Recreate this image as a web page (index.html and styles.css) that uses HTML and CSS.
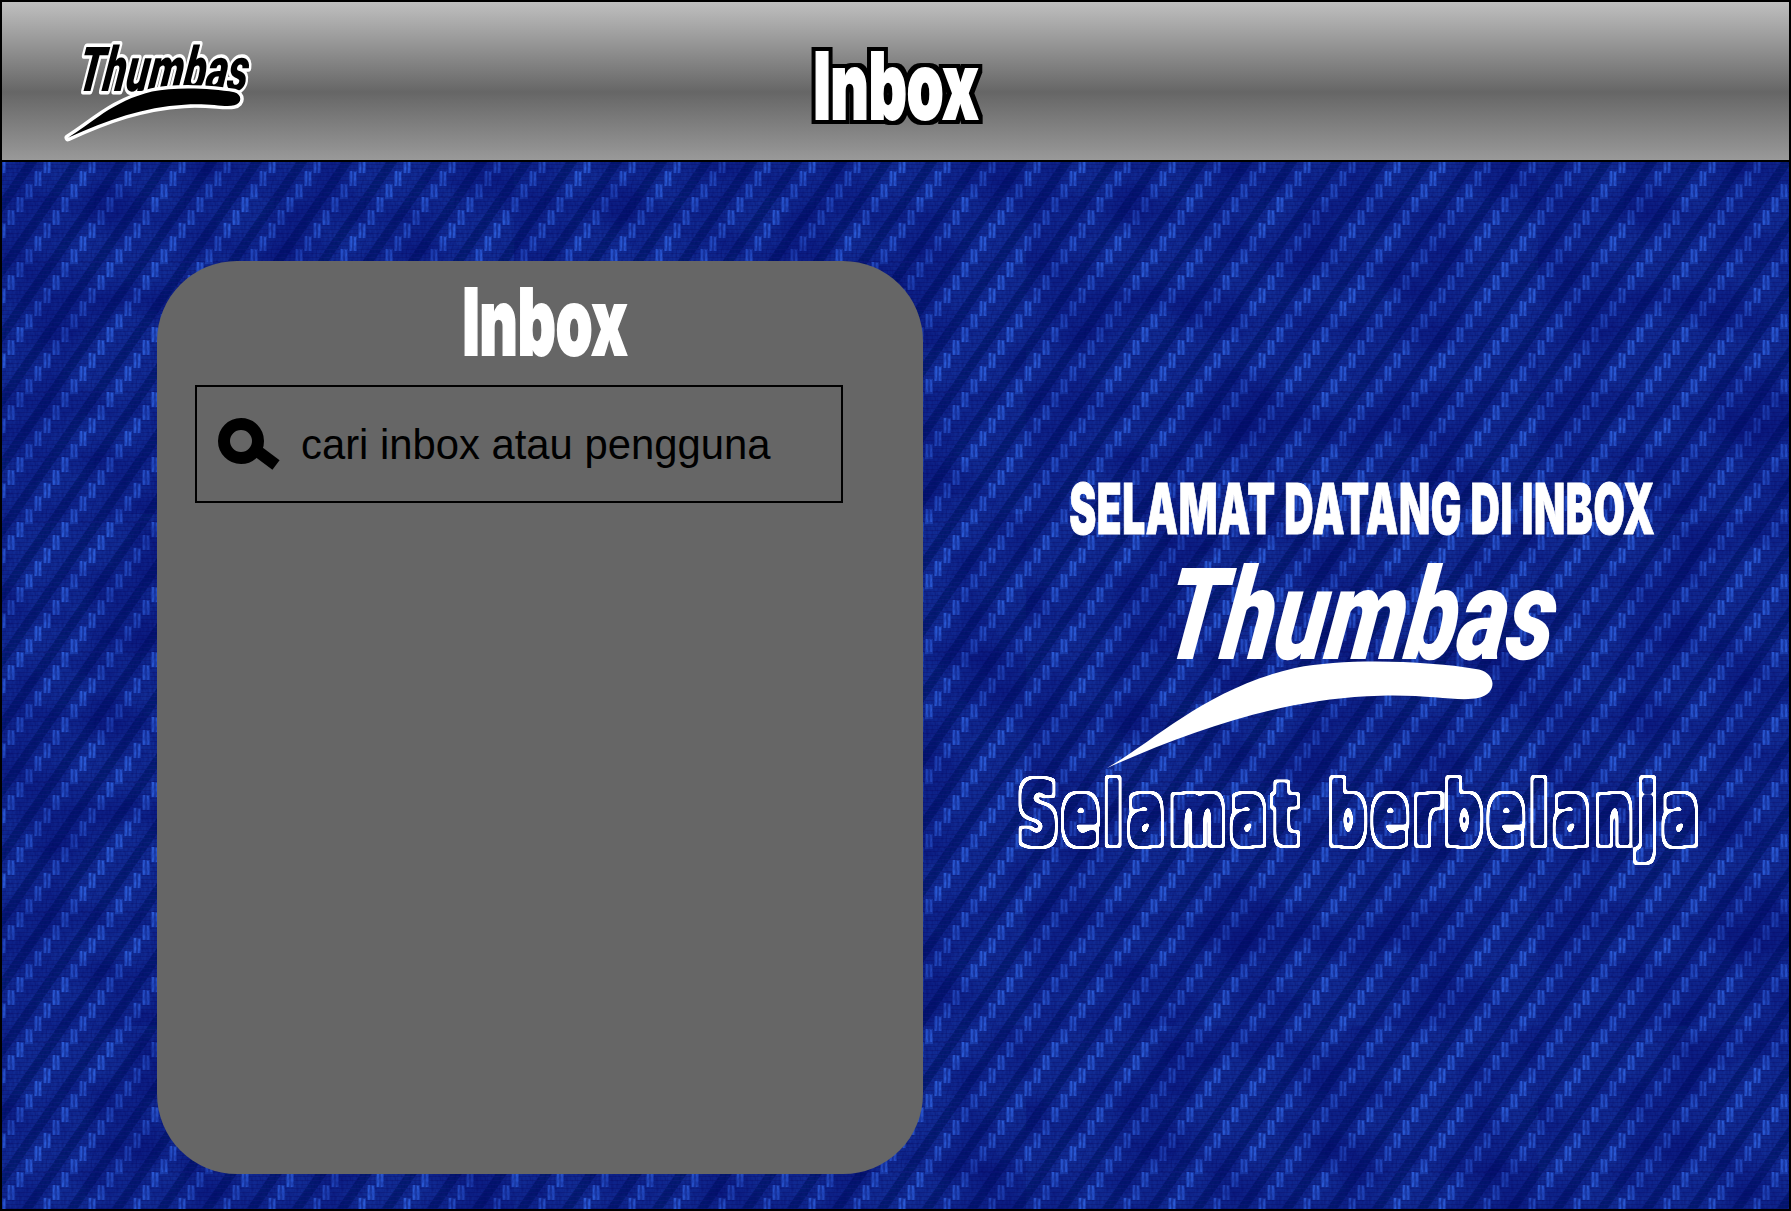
FILE: index.html
```html
<!DOCTYPE html>
<html lang="id">
<head>
    <meta charset="UTF-8">
    <meta name="viewport" content="width=device-width, initial-scale=1.0">
    <title>Inbox</title>
    <link rel="stylesheet" href="styles.css">
</head>
<body>

<!-- filter untuk teks bergaris tepi -->
<svg class="defs" width="0" height="0" aria-hidden="true">
    <defs>
        <filter id="ring" x="-5%" y="-20%" width="110%" height="140%" color-interpolation-filters="sRGB">
            <feMorphology in="SourceAlpha" operator="dilate" radius="5.8"/>
            <feGaussianBlur stdDeviation="1.8"/>
            <feComponentTransfer result="outer"><feFuncA type="linear" slope="8" intercept="-3.5"/></feComponentTransfer>
            <feMorphology in="SourceAlpha" operator="dilate" radius="3.4"/>
            <feGaussianBlur stdDeviation="1.8"/>
            <feComponentTransfer result="inner"><feFuncA type="linear" slope="8" intercept="-3.5"/></feComponentTransfer>
            <feFlood flood-color="#fff"/>
            <feComposite in2="outer" operator="in"/>
            <feComposite in2="inner" operator="out"/>
        </filter>
        <filter id="outline" x="-10%" y="-20%" width="120%" height="140%" color-interpolation-filters="sRGB">
            <feMorphology in="SourceAlpha" operator="dilate" radius="4" result="fat"/>
            <feFlood flood-color="#000"/>
            <feComposite in2="fat" operator="in" result="edge"/>
            <feMerge>
                <feMergeNode in="edge"/>
                <feMergeNode in="SourceGraphic"/>
            </feMerge>
        </filter>
    </defs>
</svg>

<div class="page">
    <header class="topbar">
        <svg class="logo logo-small" viewBox="0 0 184 97" aria-label="Thumbas">
            <text class="logo-text" x="15" y="47" textLength="170" lengthAdjust="spacingAndGlyphs" transform="skewX(-8)">Thumbas</text>
            <path transform="scale(.447 .335)" vector-effect="non-scaling-stroke" d="M0 280C50 240 100 170 188 142C240 128 320 132 372 144C390 150 390 178 372 183C350 190 320 176 260 181C170 188 90 225 0 280Z"/>
        </svg>
        <h1 class="topbar-title"><span class="squeeze">Inbox</span></h1>
    </header>

    <main class="content">
        <section class="panel">
            <h2 class="panel-title"><span class="squeeze">Inbox</span></h2>
            <form class="search">
                <svg class="search-icon" viewBox="0 0 64 56">
                    <circle cx="24" cy="24" r="17" fill="none" stroke="#000" stroke-width="12"/>
                    <path d="M39 33L59 48" stroke="#000" stroke-width="12" fill="none"/>
                </svg>
                <input class="search-input" type="text" placeholder="cari inbox atau pengguna">
            </form>
        </section>

        <section class="welcome">
            <h2 class="welcome-title"><span class="squeeze">SELAMAT DATANG DI INBOX</span></h2>
            <svg class="logo logo-big" viewBox="0 0 448 203" aria-label="Thumbas">
                <text class="logo-text" x="67" y="94" textLength="390" lengthAdjust="spacingAndGlyphs" transform="skewX(-8)">Thumbas</text>
                <path transform="scale(1 .725)" d="M0 280C50 240 100 170 188 142C240 128 320 132 372 144C390 150 390 178 372 183C350 190 320 176 260 181C170 188 90 225 0 280Z"/>
            </svg>
            <p class="welcome-text"><span>Selamat berbelanja</span></p>
        </section>
    </main>
</div>

</body>
</html>
```

FILE: styles.css
```css
html, body {
    margin: 0;
    height: 100%;
}

body {
    font-family: "Liberation Sans", Arial, sans-serif;
    background-color: #12308f;
}

.defs {
    position: absolute;
}

.page {
    box-sizing: border-box;
    height: 1211px;
    border: 2px solid #000;
    overflow: hidden;
    display: flex;
    flex-direction: column;
    background-color: #112c94;
    background-image:
        url("data:image/svg+xml,%3Csvg xmlns='http://www.w3.org/2000/svg' width='512' height='512'%3E%3Cfilter id='c'%3E%3CfeTurbulence type='fractalNoise' baseFrequency='.012 .018' numOctaves='3' stitchTiles='stitch'/%3E%3CfeColorMatrix values='0 0 0 0 0 0 0 0 0 0 0 0 0 0 .12 0 0 0 2 -.8'/%3E%3C/filter%3E%3Crect width='512' height='512' filter='url(%23c)' opacity='.45'/%3E%3C/svg%3E"),
        url("data:image/svg+xml,%3Csvg xmlns='http://www.w3.org/2000/svg' width='45' height='65'%3E%3Cfilter id='s'%3E%3CfeGaussianBlur stdDeviation='.55'/%3E%3C/filter%3E%3Cfilter id='n'%3E%3CfeTurbulence type='fractalNoise' baseFrequency='.4 .2' numOctaves='2' stitchTiles='stitch'/%3E%3CfeColorMatrix values='0 0 0 0 0 0 0 0 0 0 0 0 0 0 .1 0 0 0 1.2 -.4'/%3E%3C/filter%3E%3Crect width='45' height='65' fill='%23112c94'/%3E%3Cg filter='url(%23s)'%3E%3Cg fill='%23081a6a' opacity='.8'%3E%3Cpolygon points='0,65 11,65 56,0 45,0'/%3E%3Cpolygon points='-45,65 -34,65 11,0 0,0'/%3E%3C/g%3E%3Cpath d='M22.5 0V65' stroke='%230a2080' stroke-width='45' stroke-dasharray='1 3' opacity='.8'/%3E%3Cg fill='%231a3fae'%3E%3Crect x='14' y='0' width='8' height='15'/%3E%3Crect x='5' y='13' width='8' height='15'/%3E%3Crect x='41' y='26' width='4' height='15'/%3E%3Crect x='0' y='26' width='4' height='15'/%3E%3Crect x='32' y='39' width='8' height='15'/%3E%3Crect x='23' y='52' width='8' height='13'/%3E%3Crect x='23' y='0' width='8' height='2'/%3E%3C/g%3E%3Cg fill='%232a5ad6'%3E%3Crect x='15' y='0' width='2' height='15'/%3E%3Crect x='19' y='1' width='2' height='14'/%3E%3Crect x='6' y='13' width='2' height='15'/%3E%3Crect x='10' y='14' width='2' height='14'/%3E%3Crect x='42' y='26' width='2' height='15'/%3E%3Crect x='1' y='27' width='2' height='14'/%3E%3Crect x='33' y='39' width='2' height='15'/%3E%3Crect x='37' y='40' width='2' height='14'/%3E%3Crect x='24' y='52' width='2' height='13'/%3E%3Crect x='28' y='53' width='2' height='12'/%3E%3C/g%3E%3C/g%3E%3Crect width='45' height='65' filter='url(%23n)' opacity='.5'/%3E%3C/svg%3E");
}

/* bar atas */
.topbar {
    flex: none;
    box-sizing: border-box;
    height: 160px;
    border-bottom: 2px solid #000;
    background: linear-gradient(#bfbfbf, #666 57%, #999);
    display: grid;
    grid-template-columns: 1fr auto 1fr;
    align-items: center;
    padding-left: 66px;
}

h1, h2, p {
    margin: 0;
}

.squeeze {
    display: inline-block;
    white-space: nowrap;
    font-family: Inter, "Liberation Sans", sans-serif;
    font-weight: 900;
    color: #fff;
    -webkit-text-stroke: 2px #fff;
    transform: scaleX(.64);
}

.topbar-title {
    grid-column: 2;
    grid-row: 1;
    font-size: 92px;
    line-height: 92px;
    filter: url(#outline);
    margin: 10px 0 0 -66px;
}

.logo {
    display: block;
    overflow: visible;
}

.logo-text {
    font-family: Roboto, "Liberation Sans", sans-serif;
    font-style: italic;
    font-weight: 900;
}

.logo-small {
    grid-column: 1;
    grid-row: 1;
    width: 184px;
    height: 97px;
    margin-top: 22px;
    fill: #000;
    stroke: #fff;
    stroke-width: 7px;
    stroke-linejoin: round;
    paint-order: stroke;
}

.logo-small .logo-text {
    font-size: 62px;
}

.logo-big {
    flex: none;
    width: 448px;
    height: 203px;
    margin: 30px 50px 0 0;
    fill: #fff;
}

.logo-big .logo-text {
    font-size: 128px;
}

/* isi halaman */
.content {
    flex: 1;
    display: flex;
    align-items: flex-start;
    padding: 99px 0 0 155px;
}

.panel {
    flex: none;
    box-sizing: border-box;
    width: 766px;
    height: 913px;
    padding: 0 38px;
    border-radius: 80px;
    background-color: #666;
}

.panel-title {
    height: 124px;
    padding-left: 10px;
    font-size: 92px;
    line-height: 122px;
    text-align: center;
}

.search {
    box-sizing: border-box;
    width: 648px;
    height: 118px;
    border: 2px solid #000;
    display: flex;
    align-items: center;
    gap: 20px;
    padding: 2px 0 0 20px;
}

.search-icon {
    flex: none;
    width: 64px;
    height: 56px;
}

.search-input {
    flex: 1;
    min-width: 0;
    border: none;
    outline: none;
    padding: 0;
    background: transparent;
    font-family: "Liberation Sans", Arial, sans-serif;
    font-size: 41.8px;
    color: #000;
}

.search-input::placeholder {
    color: #000;
    opacity: 1;
}

.welcome {
    flex: 1;
    min-width: 0;
    display: flex;
    flex-direction: column;
    align-items: center;
    padding-top: 221px;
}

.welcome-title {
    flex: none;
    height: 53px;
    margin-left: 12px;
    font-size: 70px;
    line-height: 53px;
    letter-spacing: 1px;
    white-space: nowrap;
}

.welcome-title .squeeze {
    -webkit-text-stroke: 1px #fff;
    transform: scaleX(.58);
}

.welcome-text {
    flex: none;
    width: 680px;
    margin: 2px 0 0 4px;
    filter: url(#ring);
}

.welcome-text span {
    display: block;
    white-space: nowrap;
    font-family: "DejaVu Sans", sans-serif;
    font-weight: 400;
    font-size: 80px;
    line-height: 90px;
    letter-spacing: 14px;
    color: #fff;
    transform-origin: left center;
    transform: translateX(3px) scaleX(.663);
}
```
